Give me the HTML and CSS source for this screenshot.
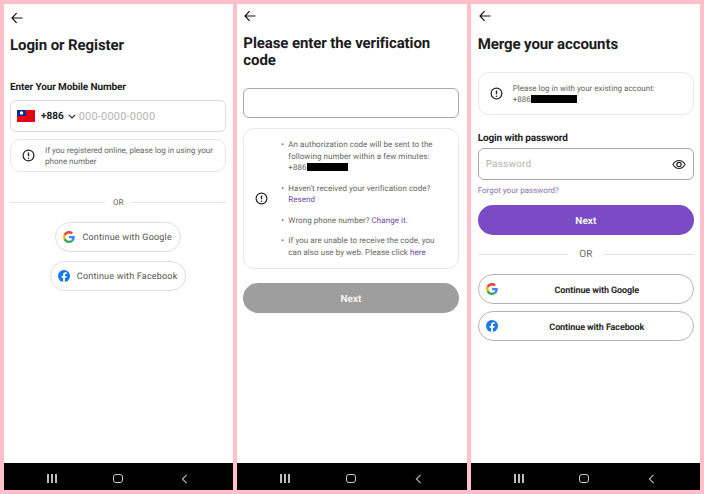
FILE: index.html
```html
<!DOCTYPE html>
<html lang="en">
<head>
<meta charset="utf-8">
<title>Login flow</title>
<link rel="stylesheet" href="styles.css">
</head>
<body>
<svg class="defs" width="0" height="0" aria-hidden="true">
  <defs>
    <symbol id="arrow" viewBox="0 0 12 12"><path d="M11.5 6H1M5.6 1.200 1 6l4.600 4.800" fill="none" stroke="#111" stroke-width="1.200"/></symbol>
    <symbol id="alert" viewBox="0 0 14 14"><circle cx="7" cy="7" r="5.800" fill="none" stroke="#222" stroke-width="1.300"/><path d="M7 3.800v4" stroke="#222" stroke-width="1.500"/><circle cx="7" cy="9.900" r=".85" fill="#222"/></symbol>
    <symbol id="google" viewBox="0 0 48 48">
      <path fill="#EA4335" d="M24 9.500c3.500 0 6.700 1.200 9.200 3.600l6.900-6.900C35.900 2.400 30.500 0 24 0 14.600 0 6.500 5.400 2.600 13.200l8 6.200C12.500 13.700 17.800 9.500 24 9.500z"/>
      <path fill="#4285F4" d="M47 24.500c0-1.600-.1-3.100-.4-4.500H24v9h12.900c-.6 3-2.200 5.500-4.700 7.200l7.700 6C44.400 38 47 31.800 47 24.500z"/>
      <path fill="#FBBC05" d="M10.600 28.600c-.5-1.400-.8-3-.8-4.600s.3-3.200.8-4.600l-8-6.200C.9 16.500 0 20.100 0 24s.9 7.500 2.600 10.800l8-6.200z"/>
      <path fill="#34A853" d="M24 48c6.500 0 11.900-2.100 15.900-5.800l-7.700-6c-2.200 1.400-4.900 2.300-8.200 2.300-6.200 0-11.500-4.200-13.400-9.900l-8 6.200C6.500 42.600 14.600 48 24 48z"/>
    </symbol>
    <symbol id="facebook" viewBox="0 0 24 24">
      <circle cx="12" cy="12" r="12" fill="#1877F2"/>
      <path fill="#fff" d="M16.700 15.500l.5-3.500h-3.300V9.800c0-1 .5-1.900 2-1.900h1.500v-3s-1.400-.2-2.700-.2c-2.700 0-4.500 1.700-4.500 4.600V12h-3v3.500h3V24h3.700v-8.500z"/>
    </symbol>
  </defs>
</svg>

<main class="screens">
  <section class="phone">
    <div class="content content-one">
      <svg class="back back-one"><use href="#arrow"/></svg>
      <h1 class="title title-one">Login or Register</h1>
      <p class="label label-one">Enter Your Mobile Number</p>
      <div class="phone-field">
        <svg class="flag" viewBox="0 0 18 12"><rect width="18" height="12" fill="#e60012"/><rect width="9" height="6" fill="#0a2a9c"/><circle cx="4.500" cy="3" r="1.700" fill="#fff"/></svg>
        <span class="dial">+886</span>
        <svg class="chevron" viewBox="0 0 8 5"><path d="M.8.8 4 4l3.200-3.200" fill="none" stroke="#222" stroke-width="1.100"/></svg>
        <span class="placeholder">000-0000-0000</span>
      </div>
      <div class="note note-one">
        <svg class="alert"><use href="#alert"/></svg>
        <p class="note-text">If you registered online, please log in using your phone number</p>
      </div>
      <div class="or or-one"><span>OR</span></div>
      <div class="socials">
        <button class="pill"><svg class="brand"><use href="#google"/></svg><span class="pill-text">Continue with Google</span></button>
        <button class="pill"><svg class="brand"><use href="#facebook"/></svg><span class="pill-text">Continue with Facebook</span></button>
      </div>
    </div>
    <nav class="navbar"><span class="bars"><i></i><i></i><i></i></span><span class="home"></span><svg class="nav-back" viewBox="0 0 7 12"><path d="M6 1 1 6l5 5" fill="none" stroke="#bbb" stroke-width="1.300"/></svg></nav>
  </section>

  <section class="phone">
    <div class="content content-two">
      <svg class="back back-two"><use href="#arrow"/></svg>
      <h1 class="title title-two">Please enter the verification code</h1>
      <div class="field code-field"></div>
      <div class="steps">
        <svg class="alert"><use href="#alert"/></svg>
        <ul class="step-list">
          <li>An authorization code will be sent to the following number within a few minutes:<br>+886<span class="redact"></span></li>
          <li>Haven't received your verification code?<br><a class="link">Resend</a></li>
          <li>Wrong phone number? <a class="link">Change it.</a></li>
          <li>If you are unable to receive the code, you can also use by web. Please click <a class="link">here</a></li>
        </ul>
      </div>
      <button class="next next-off">Next</button>
    </div>
    <nav class="navbar"><span class="bars"><i></i><i></i><i></i></span><span class="home"></span><svg class="nav-back" viewBox="0 0 7 12"><path d="M6 1 1 6l5 5" fill="none" stroke="#bbb" stroke-width="1.300"/></svg></nav>
  </section>

  <section class="phone">
    <div class="content content-three">
      <svg class="back back-three"><use href="#arrow"/></svg>
      <h1 class="title title-three">Merge your accounts</h1>
      <div class="note note-three">
        <svg class="alert"><use href="#alert"/></svg>
        <p class="note-text">Please log in with your existing account:<br>+886<span class="redact redact-wide"></span></p>
      </div>
      <p class="label label-three">Login with password</p>
      <div class="field password-field">
        <span class="placeholder">Password</span>
        <svg class="eye" viewBox="0 0 16 12"><path d="M1 6c1.800-3 4.200-4.500 7-4.500S13.200 3 15 6c-1.800 3-4.200 4.500-7 4.500S2.800 9 1 6z" fill="none" stroke="#222" stroke-width="1.200"/><circle cx="8" cy="6" r="2.500" fill="none" stroke="#222" stroke-width="1.300"/></svg>
      </div>
      <a class="forgot">Forgot your password?</a>
      <button class="next next-on">Next</button>
      <div class="or or-three"><span>OR</span></div>
      <button class="wide"><svg class="brand brand-wide"><use href="#google"/></svg>Continue with Google</button>
      <button class="wide wide-last"><svg class="brand brand-wide"><use href="#facebook"/></svg>Continue with Facebook</button>
    </div>
    <nav class="navbar"><span class="bars"><i></i><i></i><i></i></span><span class="home"></span><svg class="nav-back" viewBox="0 0 7 12"><path d="M6 1 1 6l5 5" fill="none" stroke="#bbb" stroke-width="1.300"/></svg></nav>
  </section>
</main>
</body>
</html>
```

FILE: styles.css
```css
* { box-sizing: border-box; }
html, body { margin: 0; height: 100%; }
body { background: #ffc0cb; font-family: Roboto, "Liberation Sans", sans-serif; color: #1c1c1e; overflow: hidden; text-rendering: geometricPrecision; }
.defs { position: absolute; }
p, h1, ul { margin: 0; padding: 0; }
button { font-family: inherit; text-rendering: geometricPrecision; }

.screens { display: flex; gap: 4px; padding: 4px; height: 494px; }
.phone { flex: 1 1 0; min-width: 0; background: #fff; display: flex; flex-direction: column; }
.content { flex: 1; display: flex; flex-direction: column; padding: 0 7px 0 6px; }
.content-two { padding-right: 8px; }
.content-three { padding: 0 6px 0 7px; }

.back { display: block; width: 12px; height: 12px; flex: none; }
.back-one { margin: 8px 0 0 1px; }
.back-two { margin: 6px 0 0 1px; }
.back-three { margin: 6px 0 0 1px; }

.title { font-size: 15px; font-weight: 700; line-height: 17px; letter-spacing: -.1px; }
.title-one { margin-top: 13px; }
.title-two { margin-top: 13px; }
.title-three { margin-top: 14px; }

.label { font-size: 10px; font-weight: 700; line-height: 12px; letter-spacing: -.12px; }
.label-one { margin-top: 28px; }
.label-three { margin-top: 18px; }

.phone-field { margin-top: 6px; height: 32px; border: 1px solid #dcdce0; border-radius: 6px; display: flex; align-items: center; padding-left: 6px; }
.flag { width: 18px; height: 12px; flex: none; }
.dial { margin-left: 6px; font-size: 10px; font-weight: 700; }
.chevron { width: 8px; height: 5px; margin-left: 4px; flex: none; }
.placeholder { color: #b3b3b3; font-size: 11px; letter-spacing: .2px; }
.phone-field .placeholder { margin-left: 3px; }

.note { display: flex; align-items: center; border: 1px solid #e8e8ea; border-radius: 10px; }
.note-one { margin-top: 7px; height: 33px; padding-left: 11px; gap: 10px; }
.note-three { margin-top: 19px; height: 43px; padding-left: 11px; gap: 10px; border-radius: 11px; }
.alert { width: 13px; height: 13px; flex: none; }
.note-text { font-size: 8px; line-height: 11px; color: #666; }

.or { display: flex; align-items: center; gap: 8px; font-size: 8px; color: #666; }
.or::before, .or::after { content: ""; flex: 1; height: 1px; background: #e4e4e6; }
.or-one { margin-top: 26px; }
.or-three { margin-top: 14px; font-size: 10px; gap: 12px; }

.socials { display: flex; flex-direction: column; align-items: center; gap: 9px; margin-top: 15px; }
.pill { height: 30px; padding: 0 8px 0 7px; background: #fff; border: 1px solid #dfdde0; border-radius: 15px; display: flex; align-items: center; gap: 7px; font-size: 9px; color: #555; letter-spacing: .2px; }
.pill-text { padding-top: 2px; }
.brand { width: 12px; height: 12px; flex: none; }

.field { border: 1px solid #a8a8aa; border-radius: 6px; }
.code-field { margin-top: 19px; height: 30px; }
.password-field { margin-top: 3px; height: 32px; display: flex; align-items: center; justify-content: space-between; padding: 0 7px; }
.password-field .placeholder { font-size: 10px; padding-top: 1px; }
.eye { width: 14px; height: 11px; }

.steps { margin-top: 10px; height: 141px; border: 1px solid #e8e8ea; border-radius: 11px; display: flex; align-items: center; padding-left: 11px; }
.step-list { list-style: none; width: 155px; margin-left: 13px; display: flex; flex-direction: column; gap: 9px; font-size: 8px; line-height: 11.5px; color: #666; letter-spacing: .05px; }
.step-list li { position: relative; padding-left: 7px; }
.step-list li::before { content: "\2022"; position: absolute; left: 0; }
.link { color: #6b4aa0; }
.redact { display: inline-block; width: 41px; height: 8px; background: #000; vertical-align: -1px; }
.redact-wide { width: 46px; }

.next { display: block; width: 100%; height: 30px; border: 0; border-radius: 15px; padding: 2px 0 0; color: #f4f4f4; font-size: 10px; font-weight: 700; }
.next-off { margin-top: 14px; background: #9e9e9e; }
.next-on { margin-top: 9px; background: #7a4bc4; }

.forgot { margin-top: 6px; font-size: 8px; line-height: 10px; color: #8d75ae; }

.wide { position: relative; width: 100%; height: 30px; margin-top: 14px; border: 1px solid #b5b5b5; border-radius: 15px; background: #fff; font-size: 9px; font-weight: 700; color: #2a2a2a; padding: 3px 0 0 22px; letter-spacing: -.1px; }
.wide-last { margin-top: 7px; }
.brand-wide { position: absolute; left: 7px; top: 8px; }

.navbar { height: 27px; background: #000; display: flex; align-items: center; justify-content: space-between; padding: 4px 45px 0 43px; flex: none; }
.bars { display: flex; gap: 2px; }
.bars i { width: 2px; height: 9px; background: #bbb; }
.home { width: 10px; height: 9px; margin-right: 3px; border: 1px solid #ccc; border-radius: 3px; }
.nav-back { width: 7px; height: 10px; }
```
